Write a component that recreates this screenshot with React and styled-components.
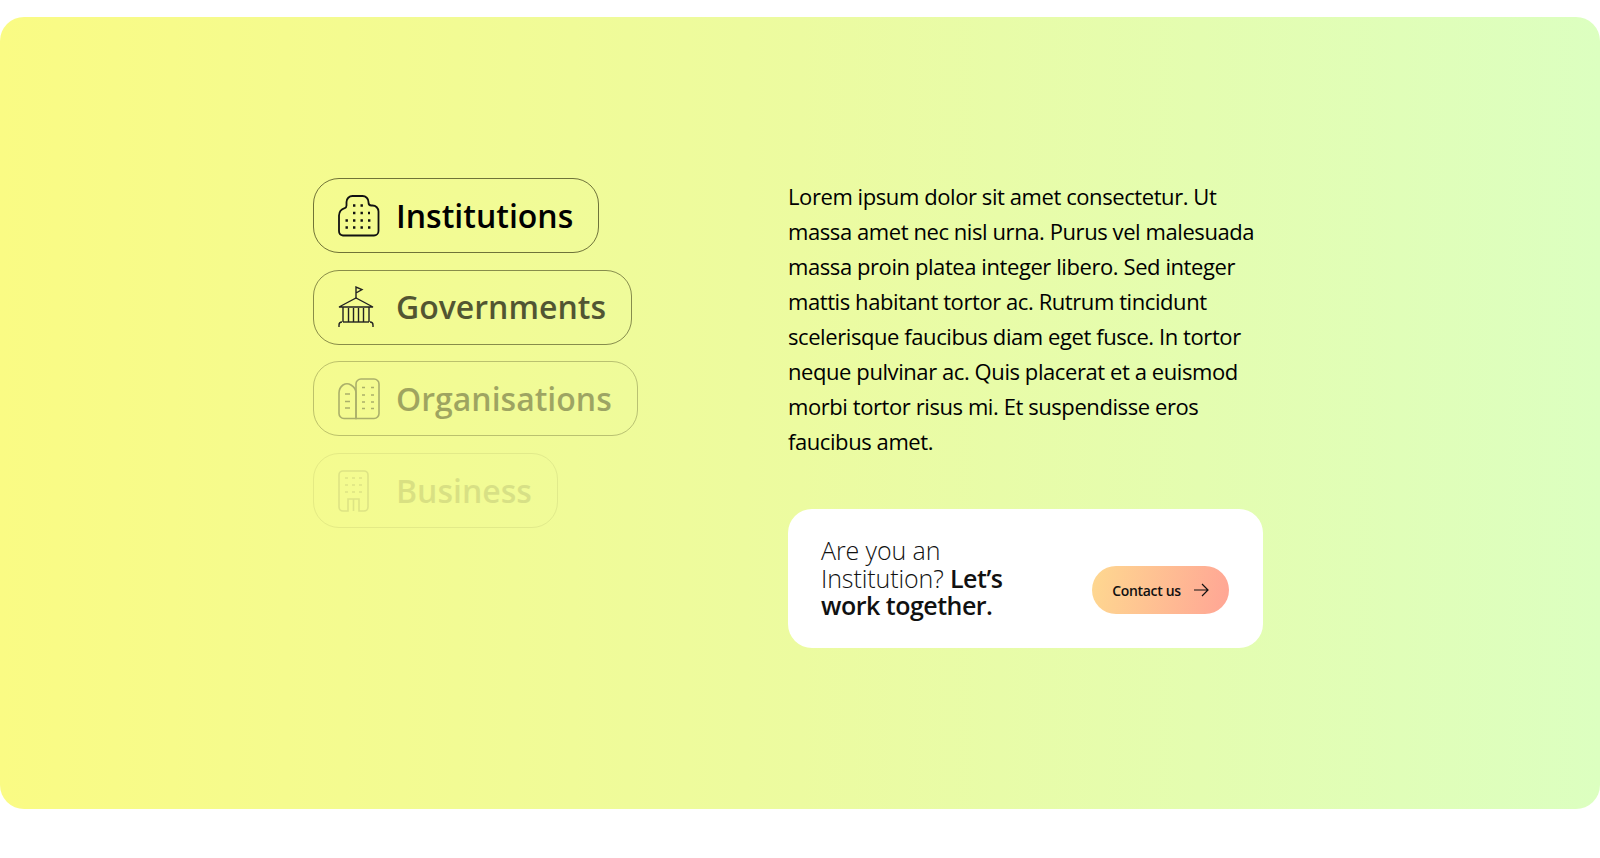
import React from 'react'
import styled, { createGlobalStyle } from 'styled-components'

const GlobalStyle = createGlobalStyle`
    html, body {
        margin: 0;
        background: #fff;
        font-family: "Open Sans", "Noto Sans", sans-serif;
        color: #000;
    }
`

const InstitutionIcon = () => (
    <svg width="42" height="42" viewBox="0 0 42 42" fill="none" stroke="#111" strokeWidth="1.800">
        <path d="M5 40.500h31a4.500 4.500 0 0 0 4.500-4.500V16.500a6 6 0 0 0-6-6h-1a3 3 0 0 1-3-3V7A6 6 0 0 0 24.500 1H14.500a6 6 0 0 0-6 6v3.500a3 3 0 0 1-1.800 2.700A8 8 0 0 0 1 20.500V36a4.500 4.500 0 0 0 4 4.500z" />
        <g strokeWidth="2.400" strokeDasharray="2.400 5.100">
            <path d="M15 10.500h10" />
            <path d="M15 18h17" />
            <path d="M7.500 25.500h25" />
            <path d="M7.500 32.500h25" />
        </g>
    </svg>
)

const GovernmentIcon = () => (
    <svg width="36" height="42" viewBox="0 0 36 42" fill="none" stroke="#222" strokeWidth="1.400">
        <path d="M18 13V1l6 2.500-6 3.500" />
        <path d="M1 21 18 12l17 9z" />
        <path d="M5 21v15M10.500 22v14M15.500 22v14M20.500 22v14M25.500 22v14M31 21v15" />
        <path d="M5 36h26" />
        <path d="M1 41v-2a3 3 0 0 1 3-3M35 41v-2a3 3 0 0 0-3-3" />
    </svg>
)

const OrganisationIcon = () => (
    <svg width="42" height="42" viewBox="0 0 42 42" fill="none" stroke="#222" strokeWidth="1.600">
        <path d="M18 40.500H6a5 5 0 0 1-5-5V15q0-5 4-8 4-2.500 8 0 5 3 5 8z" />
        <path d="M18 40.500h18a5 5 0 0 0 5-5V6a5 5 0 0 0-5-5H23a5 5 0 0 0-5 5z" />
        <path d="M7 16h5M7 23.500h5M7 30h5" />
        <path d="M24 9.500h3M33 9.500h3M24 17h3M33 17h3M24 24h3M33 24h3M24 30.500h3M33 30.500h3" />
    </svg>
)

const BusinessIcon = () => (
    <svg width="31" height="42" viewBox="0 0 31 42" fill="none" stroke="#222" strokeWidth="1.600">
        <path d="M10 41H5a4 4 0 0 1-4-4V5a4 4 0 0 1 4-4h21a4 4 0 0 1 4 4v32a4 4 0 0 1-4 4h-5V29H10z" />
        <path d="M15.500 29v12" />
        <path d="M7 8h3M14 8h3M21 8h3M7 15h3M14 15h3M21 15h3M7 22h3M14 22h3M21 22h3" />
    </svg>
)

const ArrowIcon = () => (
    <svg width="15" height="14" viewBox="0 0 15 14" fill="none" stroke="#111" strokeWidth="1.200">
        <path d="M0 7h14M8 1l6 6-6 6" />
    </svg>
)

const items = [
    { label: 'Institutions', Icon: InstitutionIcon, fade: 1, text: 1, line: 0.62 },
    { label: 'Governments', Icon: GovernmentIcon, fade: 1, text: 0.66, line: 0.5 },
    { label: 'Organisations', Icon: OrganisationIcon, fade: 0.34, text: 1, line: 0.75 },
    { label: 'Business', Icon: BusinessIcon, fade: 0.1, text: 1, line: 0.7 },
]

function App() {
    return (
        <>
            <GlobalStyle />
            <Panel>
                <Content>
                    <Tabs>
                        {items.map(({ label, Icon, fade, text, line }) => (
                            <Tab key={label} $fade={fade} $line={line}>
                                <IconSlot><Icon /></IconSlot>
                                <TabLabel $text={text}>{label}</TabLabel>
                            </Tab>
                        ))}
                    </Tabs>
                    <Details>
                        <Copy>
                            Lorem ipsum dolor sit amet consectetur. Ut massa amet nec nisl urna. Purus vel malesuada
                            massa proin platea integer libero. Sed integer mattis habitant tortor ac. Rutrum tincidunt
                            scelerisque faucibus diam eget fusce. In tortor neque pulvinar ac. Quis placerat et a euismod
                            morbi tortor risus mi. Et suspendisse eros faucibus amet.
                        </Copy>
                        <Card>
                            <CardText>
                                Are you an Institution? <strong>Let’s work together.</strong>
                            </CardText>
                            <ContactButton>
                                Contact us
                                <ArrowIcon />
                            </ContactButton>
                        </Card>
                    </Details>
                </Content>
            </Panel>
        </>
    )
}

export default App

const Panel = styled.section`
    margin-top: 17px;
    height: 792px;
    border-radius: 24px;
    background: linear-gradient(90deg, #fafb84 0%, #ecfba0 50%, #dcffc0 100%);
`
const Content = styled.div`
    display: grid;
    grid-template-columns: 475px 475px;
    padding: 161px 0 0 313px;
`
const Tabs = styled.div`
    display: flex;
    flex-direction: column;
    align-items: flex-start;
    gap: 16.7px;
`
const Tab = styled.div`
    display: flex;
    align-items: center;
    box-sizing: border-box;
    height: 75px;
    padding: 0 25px 0 24px;
    border: 1px solid rgba(30, 30, 0, ${(props) => props.$line});
    border-radius: 26px;
    opacity: ${(props) => props.$fade};
`
const IconSlot = styled.div`
    display: flex;
    align-items: center;
    width: 58px;
`
const TabLabel = styled.span`
    font-size: 32px;
    font-weight: 550;
    line-height: 40px;
    opacity: ${(props) => props.$text};
`
const Details = styled.div`
    display: flex;
    flex-direction: column;
`
const Copy = styled.p`
    margin: 0;
    padding-top: 1px;
    font-size: 22px;
    line-height: 35px;
    letter-spacing: -0.42px;
`
const Card = styled.div`
    display: flex;
    align-items: center;
    justify-content: space-between;
    box-sizing: border-box;
    height: 139px;
    margin-top: 50px;
    padding: 0 34px 0 33px;
    border-radius: 24px;
    background: #fff;
`
const CardText = styled.p`
    width: 205px;
    margin: 0;
    font-size: 25px;
    font-weight: 300;
    line-height: 27.500px;
    letter-spacing: -0.1px;
    color: #111;
    strong {
        font-weight: 600;
        letter-spacing: -0.5px;
    }
`
const ContactButton = styled.button`
    display: flex;
    align-items: center;
    justify-content: center;
    gap: 13px;
    width: 137px;
    height: 48px;
    margin-top: 23px;
    padding: 0;
    border: 0;
    border-radius: 24px;
    background: linear-gradient(100deg, #fed890 0%, #ffa595 100%);
    font-family: inherit;
    font-size: 14px;
    font-weight: 550;
    letter-spacing: -0.35px;
    color: #111;
`
